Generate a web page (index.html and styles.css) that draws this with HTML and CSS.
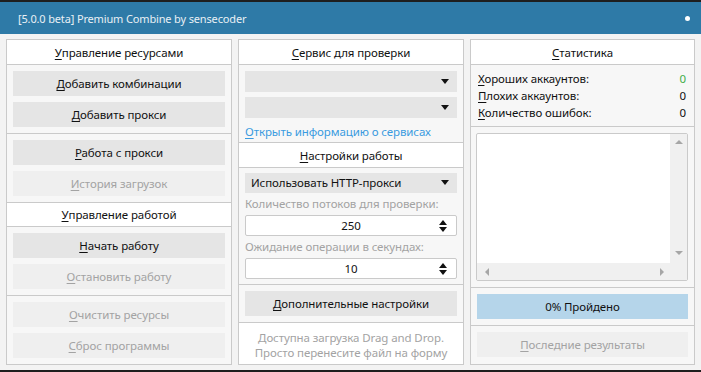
FILE: index.html
```html
<!DOCTYPE html>
<html>
<head>
  <meta charset="UTF-8">
  <title>Premium Combine</title>
  <link rel="stylesheet" href="styles.css">
</head>
<body>
  <div class="titlebar">
    <span class="title">[5.0.0 beta] Premium Combine by sensecoder</span>
    <span class="dot"></span>
  </div>

  <div class="main">
    <!-- Ресурсы и работа -->
    <div class="panel">
      <div class="header h24"><u>У</u>правление ресурсами</div>
      <div class="section">
        <button class="btn"><u>Д</u>обавить комбинации</button>
        <button class="btn"><u>Д</u>обавить прокси</button>
      </div>
      <div class="section">
        <button class="btn"><u>Р</u>абота с прокси</button>
        <button class="btn disabled"><u>И</u>стория загрузок</button>
      </div>
      <div class="header h23"><u>У</u>правление работой</div>
      <div class="section">
        <button class="btn"><u>Н</u>ачать работу</button>
        <button class="btn disabled"><u>О</u>становить работу</button>
      </div>
      <div class="section last">
        <button class="btn disabled"><u>О</u>чистить ресурсы</button>
        <button class="btn disabled"><u>С</u>брос программы</button>
      </div>
    </div>

    <!-- Сервис и настройки -->
    <div class="panel">
      <div class="header h24"><u>С</u>ервис для проверки</div>
      <div class="section services">
        <div class="combo"><span class="arrow"></span></div>
        <div class="combo"><span class="arrow"></span></div>
        <a class="link" href="#"><u>О</u>ткрыть информацию о сервисах</a>
      </div>
      <div class="header h24"><u>Н</u>астройки работы</div>
      <div class="section settings">
        <div class="combo">Использовать HTTP-прокси<span class="arrow"></span></div>
        <div class="label">Количество потоков для проверки:</div>
        <div class="spin">250<span class="spin-arrows"><span class="up"></span><span class="down"></span></span></div>
        <div class="label">Ожидание операции в секундах:</div>
        <div class="spin">10<span class="spin-arrows"><span class="up"></span><span class="down"></span></span></div>
      </div>
      <div class="section single">
        <button class="btn"><u>Д</u>ополнительные настройки</button>
      </div>
      <div class="dnd">
        <div>Доступна загрузка Drag and Drop.</div>
        <div>Просто перенесите файл на форму</div>
      </div>
    </div>

    <!-- Статистика -->
    <div class="panel">
      <div class="header h24"><u>С</u>татистика</div>
      <div class="section stats">
        <div class="stat"><span><u>Х</u>ороших аккаунтов:</span><span class="good">0</span></div>
        <div class="stat"><span><u>П</u>лохих аккаунтов:</span><span>0</span></div>
        <div class="stat"><span><u>К</u>оличество ошибок:</span><span>0</span></div>
      </div>
      <div class="section log-wrap">
        <div class="log">
          <div class="log-text"></div>
          <div class="vscroll"><span class="tri-up"></span><span class="tri-down"></span></div>
          <div class="hscroll"><span class="tri-left"></span><span class="tri-right"></span></div>
          <div class="corner"></div>
        </div>
      </div>
      <div class="section single">
        <div class="progress">0% Пройдено</div>
      </div>
      <div class="section single last">
        <button class="btn disabled"><u>П</u>оследние результаты</button>
      </div>
    </div>
  </div>

  <div class="edge"></div>
</body>
</html>
```

FILE: styles.css
```css
:root {
  --blue: #2e7aa7;
  --border: #cacaca;
  --btn: #e5e5e5;
  --btn-off: #efefef;
  --muted: #a3a3a3;
}
body {
  margin: 0;
  width: 701px;
  height: 372px;
  overflow: hidden;
  background: #f3f3f3;
  font-family: 'Noto Sans', 'Open Sans', sans-serif;
  font-size: 11.5px;
  letter-spacing: -0.1px;
  color: #111;
}
u {
  text-decoration: underline;
  text-underline-offset: 2px;
}

/* Заголовок окна */
.titlebar {
  height: 32px;
  border-top: 2px solid #1e1e1e;
  background: var(--blue);
  display: flex;
  align-items: center;
  justify-content: space-between;
  padding: 0 11px 0 18px;
}
.title {
  color: #e9f0f5;
  font-size: 11px;
  letter-spacing: -0.15px;
}
.dot {
  width: 5px;
  height: 5px;
  border-radius: 50%;
  background: #fff;
}

.main {
  display: grid;
  grid-template-columns: 226px 226px 225px;
  column-gap: 6px;
  padding: 5px 0 0 6px;
  height: 326px;
}
.panel {
  border: 1px solid var(--border);
  background: #f7f7f7;
  display: flex;
  flex-direction: column;
}
.header {
  background: #fff;
  border-bottom: 1px solid var(--border);
  display: flex;
  align-items: center;
  justify-content: center;
}
.h24 { height: 24px; }
.h23 { height: 23px; }

.section {
  display: flex;
  flex-direction: column;
  gap: 6px;
  padding: 6px 6px;
  border-bottom: 1px solid var(--border);
}
.section.last {
  border-bottom: none;
}
.btn {
  height: 25px;
  border: none;
  background: var(--btn);
  font-family: inherit;
  font-size: inherit;
  letter-spacing: inherit;
  color: #111;
  padding: 0;
}
.btn.disabled {
  background: var(--btn-off);
  color: var(--muted);
}

/* Выпадающие списки */
.combo {
  height: 21px;
  background: var(--btn);
  display: flex;
  align-items: center;
  justify-content: space-between;
  padding: 0 8px 0 6px;
  color: #111;
}
.arrow {
  margin-left: auto;
  width: 0;
  height: 0;
  border-left: 4px solid transparent;
  border-right: 4px solid transparent;
  border-top: 5px solid #111;
}
.services {
  gap: 5px;
  padding-bottom: 0;
  height: 71px;
}
.link {
  color: #3a9be0;
  text-decoration: none;
  line-height: 18px;
}
.settings {
  gap: 0;
  padding: 5px 6px;
  height: 106px;
}
.label {
  color: var(--muted);
  line-height: 22px;
}
.spin {
  height: 20px;
  background: #fff;
  border: 1px solid var(--border);
  border-radius: 2px;
  display: flex;
  align-items: center;
  justify-content: center;
  position: relative;
}
.spin-arrows {
  position: absolute;
  right: 9px;
  top: 4px;
  display: flex;
  flex-direction: column;
  gap: 2px;
}
.spin-arrows .up {
  border-left: 4px solid transparent;
  border-right: 4px solid transparent;
  border-bottom: 5px solid #111;
}
.spin-arrows .down {
  border-left: 4px solid transparent;
  border-right: 4px solid transparent;
  border-top: 5px solid #111;
}
.single {
  padding: 6px 6px 6px;
}
.dnd {
  flex: 1;
  background: #fff;
  color: var(--muted);
  text-align: center;
  line-height: 15px;
  padding-top: 7px;
}

/* Статистика */
.stats {
  gap: 0;
  padding: 5px 8px 5px 7px;
}
.stat {
  display: flex;
  justify-content: space-between;
  line-height: 17px;
}
.good {
  color: #3fae49;
}
.log-wrap {
  padding: 6px 6px 6px 5px;
}
.log {
  height: 146px;
  background: #fff;
  border: 1px solid var(--border);
  border-radius: 2px;
  display: grid;
  grid-template-columns: 1fr 17px;
  grid-template-rows: 1fr 17px;
}
.vscroll, .hscroll, .corner {
  background: #f0f0f0;
}
.vscroll {
  display: flex;
  flex-direction: column;
  justify-content: space-between;
  align-items: center;
  padding: 6px 0 8px;
}
.hscroll {
  display: flex;
  justify-content: space-between;
  align-items: center;
  padding: 0 6px 0 8px;
}
.tri-up {
  border-left: 4px solid transparent;
  border-right: 4px solid transparent;
  border-bottom: 4px solid #a6a6a6;
}
.tri-down {
  border-left: 4px solid transparent;
  border-right: 4px solid transparent;
  border-top: 4px solid #a6a6a6;
}
.tri-left {
  border-top: 4px solid transparent;
  border-bottom: 4px solid transparent;
  border-right: 4px solid #a6a6a6;
}
.tri-right {
  border-top: 4px solid transparent;
  border-bottom: 4px solid transparent;
  border-left: 4px solid #a6a6a6;
}
.progress {
  height: 25px;
  background: #b5d5ea;
  display: flex;
  align-items: center;
  justify-content: center;
}

.edge {
  height: 2px;
  margin-top: 5px;
  background: #1e1e1e;
}
```
